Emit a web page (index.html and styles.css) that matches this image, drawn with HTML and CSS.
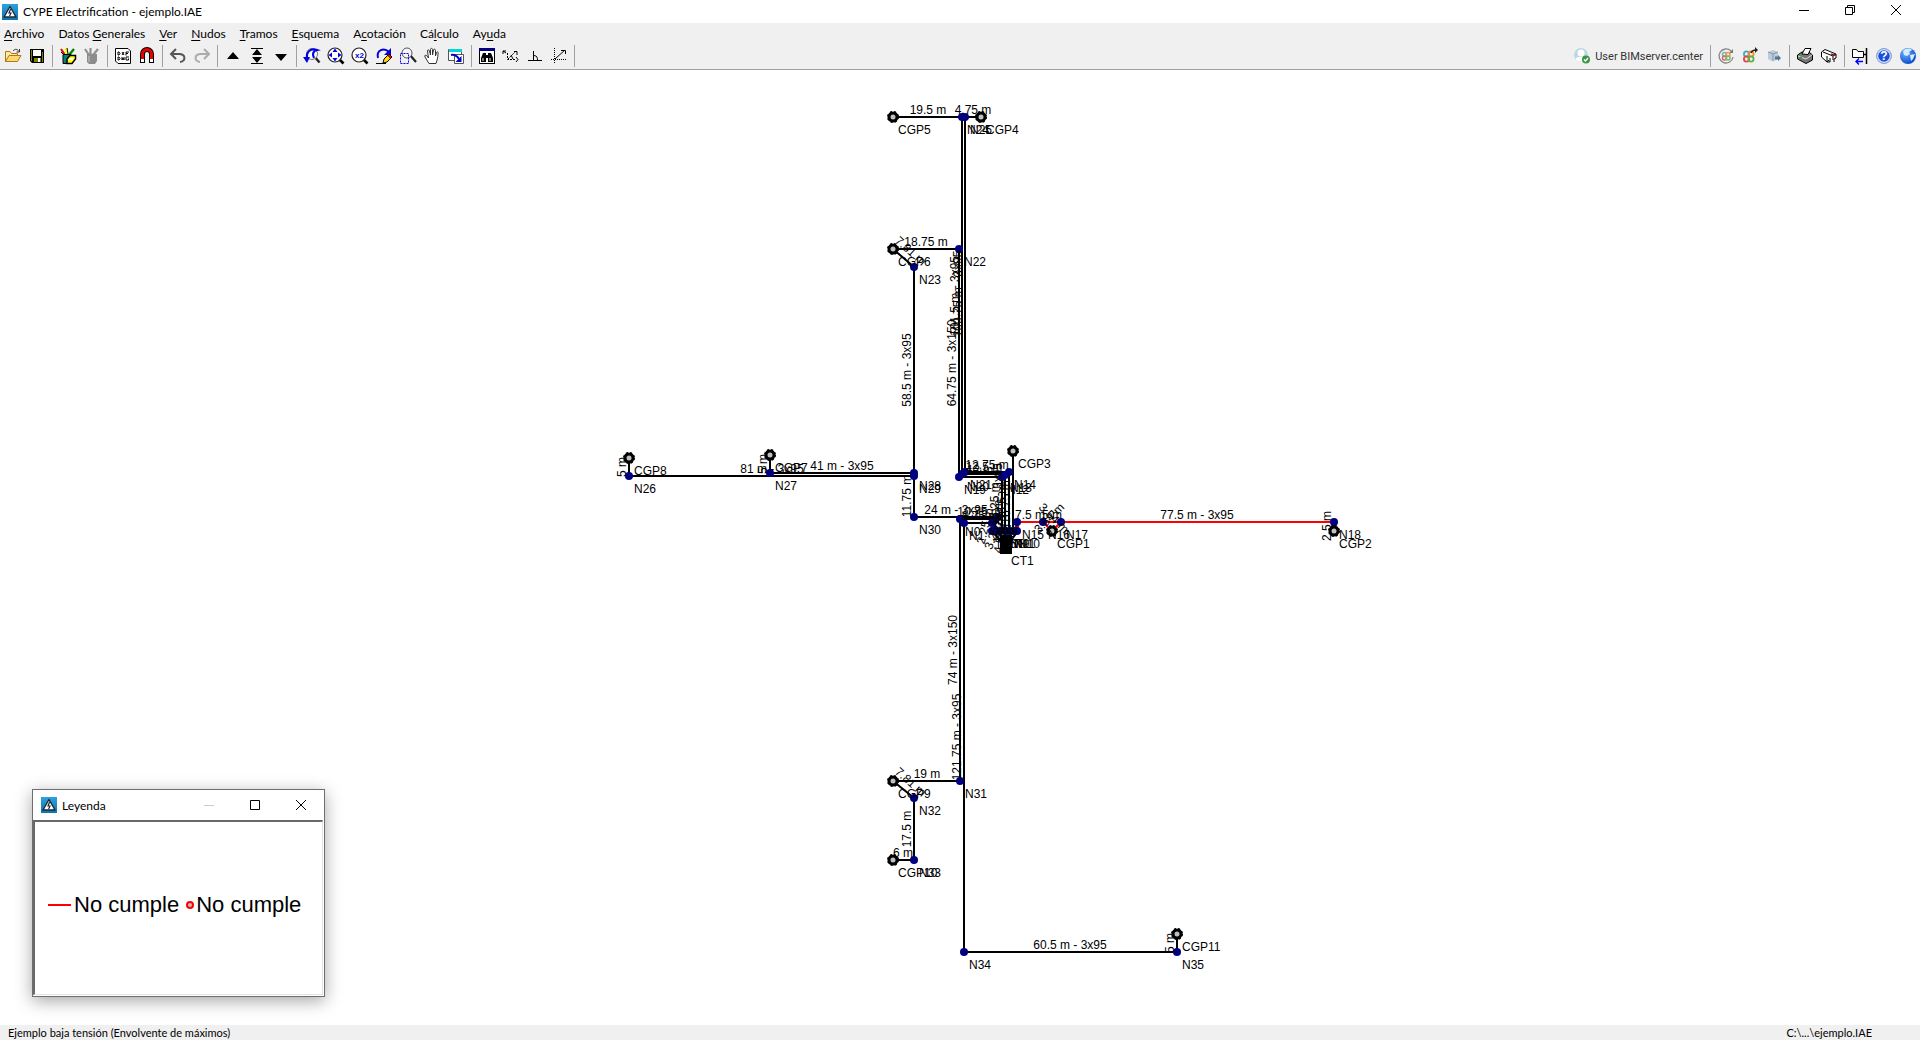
FILE: index.html
```
<!DOCTYPE html>
<html lang="es">
<head>
  <meta charset="UTF-8" />
  <meta name="viewport" content="width=device-width, initial-scale=1.0"/>
  <title>CYPE Electrification - ejemplo.IAE</title>
  <link rel="stylesheet" href="styles.css">
</head>
<body>

  <svg class="defs" aria-hidden="true">
    <defs>
      <linearGradient id="azul" x1="0" y1="0" x2="0" y2="1">
        <stop offset="0" stop-color="#2ba3e0"/><stop offset="1" stop-color="#1273ac"/>
      </linearGradient>
      <radialGradient id="bola" cx="0.35" cy="0.3" r="0.8">
        <stop offset="0" stop-color="#6db5ff"/><stop offset="1" stop-color="#003fc4"/>
      </radialGradient>
      <symbol id="logo" viewBox="0 0 16 16">
        <rect width="16" height="16" fill="url(#azul)"/>
        <path d="M8 2.5 L14 13 H2 Z" fill="#fff" stroke="#1b2838" stroke-width="1.4" stroke-linejoin="round"/>
        <path d="M8.6 5 L7 9 H9 L7.6 12" fill="none" stroke="#1b2838" stroke-width="1.2"/>
      </symbol>
      <symbol id="lupa" viewBox="0 0 20 20">
        <path d="M13.5 13.5 L17.5 17.5" stroke="#000" stroke-width="2.6"/>
        <circle cx="9" cy="9" r="7" fill="#fff" stroke="#222" stroke-width="1.2"/>
      </symbol>
      <circle id="nudo" r="4" fill="#000080"/>
      <g id="cgp">
        <circle r="4" fill="#c0c0c0" stroke="#000" stroke-width="3"/>
        <circle r="5" fill="none" stroke="#000" stroke-width="2" stroke-dasharray="2 2"/>
      </g>
    </defs>
  </svg>

  <header class="titlebar">
    <svg class="logo"><use href="#logo"/></svg>
    <h1>CYPE Electrification - ejemplo.IAE</h1>
    <div class="window-buttons">
      <button aria-label="Minimizar"><svg viewBox="0 0 12 12"><path d="M1 6.5 H11"/></svg></button>
      <button aria-label="Restaurar"><svg viewBox="0 0 12 12"><path d="M1.5 3.5 H8.5 V10.5 H1.5 Z M3.5 3.5 V1.5 H10.5 V8.5 H8.5"/></svg></button>
      <button aria-label="Cerrar"><svg viewBox="0 0 12 12"><path d="M1 1 L11 11 M11 1 L1 11"/></svg></button>
    </div>
  </header>

  <nav class="menu">
    <button><u>A</u>rchivo</button>
    <button>Datos <u>G</u>enerales</button>
    <button><u>V</u>er</button>
    <button><u>N</u>udos</button>
    <button><u>T</u>ramos</button>
    <button><u>E</u>squema</button>
    <button>A<u>c</u>otación</button>
    <button>Cá<u>l</u>culo</button>
    <button>Ay<u>u</u>da</button>
  </nav>

  <div class="toolbar">
    <div class="group">
      <button aria-label="Abrir"><svg viewBox="0 0 20 20">
        <path d="M2.5 15.5 V5.5 H7 L8.5 7.5 H14.5 V9.5" fill="#ffe9a8" stroke="#b07a10"/>
        <path d="M2.5 15.5 L6 9.5 H18 L14.5 15.5 Z" fill="#ffd873" stroke="#b07a10"/>
        <path d="M10 5 C12 2.5 14.5 3 16 5.5 M16.5 3 V6 H13.5" fill="none" stroke="#333"/>
      </svg></button>
      <button aria-label="Guardar"><svg viewBox="0 0 20 20">
        <path d="M3 3 H17 V17 H5 L3 15 Z" fill="#000"/>
        <rect x="6" y="4" width="8" height="6" fill="#fff"/>
        <path d="M4.5 4 V15 M15.5 6 V16" stroke="#808000"/>
        <rect x="7" y="12" width="7" height="4" fill="#808000"/><rect x="11" y="12" width="2" height="4" fill="#fff"/>
      </svg></button>
    </div>
    <div class="group">
      <button aria-label="Datos de obra"><svg viewBox="0 0 20 20">
        <path d="M7 9 L3 3" stroke="#e00000" stroke-width="2"/><path d="M8 9 V2" stroke="#ff0" stroke-width="2"/>
        <path d="M11 9 L16 3" stroke="#008000" stroke-width="2.4"/><path d="M3 6 L6 9 M9 2 L10 8" stroke="#000"/>
        <path d="M5 8.5 H13 V17.5 H5 Z" fill="#008080" stroke="#000"/>
        <path d="M9 13 L12 9.5 H17.5 V13 L14 17.5 H9 Z" fill="#ff0" stroke="#000" stroke-width="1.5"/>
        <path d="M11 13 H15" stroke="#fff" stroke-width="2"/>
      </svg></button>
      <button aria-label="Bibliotecas"><svg viewBox="0 0 20 20">
        <path d="M7 9 L3 3 M8.5 9 V2 M11 9 L16 3" stroke="#909090" stroke-width="2.2"/>
        <path d="M5 8 H15 V15 L13 18 H7 L5 16 Z" fill="#8c8c8c"/><path d="M7 10 V16" stroke="#c8c8c8"/>
      </svg></button>
    </div>
    <div class="group">
      <button aria-label="Plantillas"><svg viewBox="0 0 20 20">
        <path d="M2.5 2.5 H15 L17.5 5 V17.5 H5 L2.5 15 Z" fill="#fff" stroke="#000"/>
        <path d="M5 6 V9 H6 L7 7.5 L6 6 Z M9 6 L11 9 M11 6 L9 9 M16 6 H13 V7.5 H15 M13 7.5 V9.5 M5 11 V14 H6 L7 12.5 L6 11 Z M9 11 V14 L10 12 L11 14 V11 M16 11 H13 V14 H15.5 V12.5" fill="none" stroke="#000"/>
      </svg></button>
      <button aria-label="Capturas"><svg viewBox="0 0 20 20">
        <path d="M5.5 17 V8 A4.5 4.5 0 0 1 14.5 8 V17" fill="none" stroke="#000" stroke-width="5"/>
        <path d="M5.5 14 V8 A4.5 4.5 0 0 1 14.5 8 V14" fill="none" stroke="#e60000" stroke-width="3"/>
        <path d="M4 14.5 H7 M13 14.5 H16" stroke="#fff" stroke-width="3"/>
      </svg></button>
    </div>
    <div class="group">
      <button aria-label="Deshacer"><svg viewBox="0 0 20 20">
        <path d="M8 3 L3 8 L8 13 M3 8 H11 C18 8 18 15 12 16" fill="none" stroke="#555" stroke-width="2"/>
      </svg></button>
      <button aria-label="Rehacer"><svg viewBox="0 0 20 20">
        <path d="M12 3 L17 8 L12 13 M17 8 H9 C2 8 2 15 8 16" fill="none" stroke="#ababab" stroke-width="2"/>
      </svg></button>
    </div>
    <div class="group">
      <button aria-label="Subir"><svg viewBox="0 0 20 20"><path d="M4 13 L10 6 L16 13 Z"/></svg></button>
      <button aria-label="Grupos"><svg viewBox="0 0 20 20"><path d="M4 2.5 H16 M4 17.5 H16" stroke="#000"/><path d="M5 9 L10 3 L15 9 Z M5 11 L10 17 L15 11 Z"/></svg></button>
      <button aria-label="Bajar"><svg viewBox="0 0 20 20"><path d="M4 8 L10 15 L16 8 Z"/></svg></button>
    </div>
    <div class="group">
      <button aria-label="Vista anterior"><svg viewBox="0 0 20 20">
        <path d="M12 10 L17.5 16.5" stroke="#222" stroke-width="2.4"/><circle cx="10" cy="8" r="5.5" fill="#fff" stroke="#777"/>
        <path d="M5 13 C4 5 9 2 15 4 C11 5 10 8 12 12" fill="none" stroke="#0000e0" stroke-width="2.2"/>
        <path d="M1 11 H8 L5 17 Z" fill="#0000e0"/>
      </svg></button>
      <button aria-label="Vista completa"><svg viewBox="0 0 20 20"><use href="#lupa"/>
        <path d="M9 2.5 L11.5 6 H6.5 Z M9 15.5 L6.5 12 H11.5 Z M2.5 9 L6 6.5 V11.5 Z M15.5 9 L12 6.5 V11.5 Z" fill="#0000e0"/>
      </svg></button>
      <button aria-label="Vista doble"><svg viewBox="0 0 20 20"><use href="#lupa"/>
        <text class="x2" x="5" y="12">x2</text>
      </svg></button>
      <button aria-label="Redibujar"><svg viewBox="0 0 20 20">
        <path d="M4 12 C2 4 10 1 15 6" fill="none" stroke="#0000e0" stroke-width="2"/>
        <path d="M17 2 V9 H10 Z" fill="#0000e0"/><path d="M2 17.5 H12" stroke="#000"/>
        <path d="M9 17 L10 13 L15 8 L18 11 L13 16 Z" fill="#ffe000" stroke="#000"/><path d="M14 9 L17 12" stroke="#c00" stroke-width="2"/>
      </svg></button>
      <button aria-label="Marco de vista"><svg viewBox="0 0 20 20">
        <path d="M12 9 L18 16" stroke="#222" stroke-width="2.2"/><circle cx="9" cy="7" r="5" fill="#f8f8f8" stroke="#555"/>
        <path d="M2.5 7.5 H10.5 V17.5 H2.5 Z" fill="none" stroke="#00f" stroke-dasharray="2 1"/>
      </svg></button>
      <button aria-label="Mover vista"><svg viewBox="0 0 20 20">
        <path d="M7 17.5 L3 11 C2 9 4 8.5 5 10 L6.5 12 L5.5 5 C5.5 3.5 7 3.5 7.5 5 L8.5 9 V3.5 C8.5 2 10.5 2 10.5 3.5 V9 L11.5 4 C12 2.5 13.5 3 13.5 4.5 V10 L14.5 6.5 C15.5 5 16.5 6 16 8 C16 12 15 14 14 17.5 Z" fill="#fff" stroke="#333"/>
      </svg></button>
      <button aria-label="Vista global"><svg viewBox="0 0 20 20">
        <path d="M2.5 3.5 H15.5 V14.5 H2.5 Z" fill="#fff" stroke="#555"/><rect x="3" y="3" width="13" height="3" fill="#00d8d8"/>
        <path d="M8.5 8.5 H17.5 V17.5 H8.5 Z" fill="#fff" stroke="#555"/>
        <path d="M5 9 C9 8 11 10 13 13" fill="none" stroke="#00c" stroke-width="2"/><path d="M15.5 10 V16 H9.5 Z" fill="#00c"/>
      </svg></button>
    </div>
    <div class="group">
      <button aria-label="Buscar"><svg viewBox="0 0 20 20">
        <rect x="2.5" y="2.5" width="15" height="15" fill="#fff" stroke="#000"/><rect x="2" y="2" width="16" height="3" fill="#000080"/>
        <path d="M6 7 H9 V9 H11 V7 H14 L16 12 V16 H11 V12 H9 V16 H4 V12 Z"/><path d="M6 12 V15 M13 12 V15" stroke="#fff"/>
      </svg></button>
      <button aria-label="Coordenadas"><svg viewBox="0 0 20 20">
        <path d="M6.5 7 V13.5 H15 M7 13 L14 6" fill="none" stroke="#000" stroke-dasharray="2 1"/>
        <path d="M2 5 L5 7 M2 5 V8 M2 5 H5 M13 5.5 H16 V9 M15 11 L17 13.5 L15 16 M10 9 L12 13" fill="none" stroke="#000"/>
      </svg></button>
      <button aria-label="Ortogonal"><svg viewBox="0 0 20 20">
        <path d="M3 14.5 H17 M8.5 5 V14 M9 9.5 C12 9.5 12.5 12 12.5 14" fill="none" stroke="#000"/>
      </svg></button>
      <button aria-label="Referencias"><svg viewBox="0 0 20 20">
        <path d="M5.5 2 V18 M2 13.5 H18" stroke="#000" stroke-dasharray="1 1"/><path d="M6 13 L16 4 M12 4.5 H16.5 V8" fill="none" stroke="#000"/>
      </svg></button>
    </div>

    <div class="group right">
      <button class="user">
        <svg viewBox="0 0 20 20">
          <circle cx="8" cy="9" r="7" fill="#b9d9e4"/><circle cx="8" cy="7" r="3.5" fill="#fff"/>
          <path d="M2.5 13 C4 10 12 10 13.5 13 C11 16.5 5 16.5 2.5 13 Z" fill="#fff"/>
          <circle cx="13" cy="13.5" r="4" fill="#3f9443"/><path d="M11 13.5 L12.5 15 L15 12" fill="none" stroke="#fff" stroke-width="1.3"/>
        </svg>
        User BIMserver.center
      </button>
    </div>
    <div class="group">
      <button aria-label="Actualizar"><svg viewBox="0 0 20 20">
        <path d="M15 5 A7 7 0 1 0 17 11" fill="none" stroke="#888" stroke-width="1.3"/><path d="M17 3 V7 H13 Z" fill="#777"/>
        <g fill="none" stroke-width="1.5"><circle cx="8.5" cy="8.5" r="2" stroke="#6bb7c9"/><circle cx="12" cy="8.5" r="2" stroke="#e59a50"/><circle cx="8.5" cy="12" r="2" stroke="#d66"/><circle cx="12" cy="12" r="2" stroke="#7aba6a"/></g>
      </svg></button>
      <button aria-label="Compartir"><svg viewBox="0 0 20 20">
        <g fill="none" stroke-width="1.8"><circle cx="6.5" cy="8" r="2.6" stroke="#3bacc8"/><circle cx="11" cy="8" r="2.6" stroke="#ef8a2d"/><circle cx="6.5" cy="13" r="2.6" stroke="#e24848"/><circle cx="11" cy="13" r="2.6" stroke="#62b146"/></g>
        <path d="M11 7 C12 4 14 4 16 4" fill="none" stroke="#222" stroke-width="1.5"/><path d="M15 1 L18 4 L15 7 Z" fill="#222"/>
      </svg></button>
      <button aria-label="Exportar modelo"><svg viewBox="0 0 20 20">
        <path d="M4 6 L9 4 L14 6 V13 L9 15.5 L4 13 Z" fill="#bccbd9"/><path d="M4 6 L9 8 L14 6 M9 8 V15" fill="none" stroke="#8298ad"/><path d="M11 10.5 H14 V9 L17 12 L14 15 V13.5 H11 Z" fill="#4d7598"/>
      </svg></button>
    </div>
    <div class="group">
      <button aria-label="Listados"><svg viewBox="0 0 20 20">
        <path d="M2.5 9 L7 6 H14 L17.5 9 V14 L11 17.5 L2.5 13 Z" fill="#777" stroke="#000"/>
        <path d="M7 8 L10 2.5 H16 L13 8.5 Z" fill="#fff" stroke="#000"/><path d="M3 10 L11 13 L17 9" fill="none" stroke="#ddd"/><path d="M5 11.5 H7" stroke="#0c0" stroke-width="1.5"/>
      </svg></button>
      <button aria-label="Planos"><svg viewBox="0 0 20 20">
        <path d="M2.5 6 L6 3.5 L17 8 V12 L15 13 V16 M2.5 6 V11 L8 16 L10 14" fill="#fff" stroke="#000"/>
        <path d="M4 6 L14 10 V14 M8 10 V16 H11 V12 M12 8 L17 9" fill="none" stroke="#000"/><rect x="14" y="8" width="2" height="2" fill="#d00"/>
      </svg></button>
    </div>
    <div class="group">
      <button aria-label="Exportar"><svg viewBox="0 0 20 20">
        <path d="M2.5 11.5 V3.5 H6.5 L8 5.5 H13.5 V11.5 Z" fill="#fff" stroke="#000"/><path d="M16.5 2 V18 M14 8.5 H17" stroke="#000" stroke-width="1.5"/>
        <path d="M6 15.5 H13 M9 12.5 L6 15.5 L9 18.5" fill="none" stroke="#00f" stroke-width="1.4"/>
      </svg></button>
      <button aria-label="Ayuda"><svg viewBox="0 0 20 20">
        <circle cx="10" cy="10" r="7.5" fill="#1c4fd8" stroke="#8fa6dc"/><circle cx="10" cy="10" r="6.4" fill="none" stroke="#dfe8fb" stroke-width="1.2"/>
        <text class="help" x="10" y="14">?</text>
      </svg></button>
      <button aria-label="Web"><svg viewBox="0 0 20 20">
        <circle cx="10" cy="10" r="8" fill="url(#bola)"/><path d="M5 5 C8 2 12 2 14 4 L11 6 L12 8 L9 10 L6 9 Z M12 9 L17 8 L15 13 L13 15 Z" fill="#d5ecff"/>
      </svg></button>
    </div>
  </div>

  <main class="canvas">
    <svg class="plano" role="img" aria-label="Esquema de la red">
      <g transform="translate(0 -70)">

        <!-- tramos -->
        <g class="tramos">
          <path d="M893 117 H981 M962 117 V474 H1005 V531 M965 117 V472 H1011"/>
          <path d="M893 249 H959 V477 H1002 V531 M893 249 L914 267 V517 H998"/>
          <path d="M629 458 V476 H914 M770 455 V473 H914"/>
          <path d="M1013 451 V531 M1009 473 V531"/>
          <path d="M960 781 V519 H998 L992 531 M964 952 V523 H992 L1001 531"/>
          <path d="M893 781 H960 M893 781 L914 798 V860 H893"/>
          <path d="M964 952 H1177 V934"/>
        </g>
        <path class="malo" d="M1018 531 V522 H1334 V531 M1043 522 L1052 531 L1061 522"/>
        <rect x="1000" y="535" width="12" height="19"/>
        <path class="tramos" d="M992 531 L1006 547 M998 531 L1006 547 M1018 531 L1006 547"/>

        <!-- nudos -->
        <use href="#nudo" x="962" y="117"/><use href="#nudo" x="965" y="117"/>
        <use href="#nudo" x="959" y="249"/><use href="#nudo" x="914" y="267"/>
        <use href="#nudo" x="914" y="473"/><use href="#nudo" x="914" y="476"/>
        <use href="#nudo" x="629" y="476"/><use href="#nudo" x="770" y="473"/>
        <use href="#nudo" x="914" y="517"/>
        <use href="#nudo" x="959" y="477"/><use href="#nudo" x="962" y="474"/><use href="#nudo" x="965" y="472"/>
        <use href="#nudo" x="1002" y="477"/><use href="#nudo" x="1005" y="475"/><use href="#nudo" x="1009" y="472"/>
        <use href="#nudo" x="960" y="519"/><use href="#nudo" x="964" y="523"/>
        <use href="#nudo" x="998" y="517"/><use href="#nudo" x="995" y="520"/><use href="#nudo" x="992" y="523"/>
        <use href="#nudo" x="992" y="531"/><use href="#nudo" x="996" y="531"/><use href="#nudo" x="1000" y="531"/>
        <use href="#nudo" x="1005" y="531"/><use href="#nudo" x="1009" y="531"/><use href="#nudo" x="1013" y="531"/>
        <use href="#nudo" x="1017" y="531"/><use href="#nudo" x="1017" y="522"/>
        <use href="#nudo" x="1043" y="522"/><use href="#nudo" x="1061" y="522"/><use href="#nudo" x="1334" y="522"/>
        <use href="#nudo" x="960" y="781"/><use href="#nudo" x="914" y="798"/><use href="#nudo" x="914" y="860"/>
        <use href="#nudo" x="964" y="952"/><use href="#nudo" x="1177" y="952"/>

        <!-- cajas generales de proteccion -->
        <use href="#cgp" x="893" y="117"/><use href="#cgp" x="981" y="117"/><use href="#cgp" x="893" y="249"/>
        <use href="#cgp" x="629" y="458"/><use href="#cgp" x="770" y="455"/><use href="#cgp" x="1013" y="451"/>
        <use href="#cgp" x="1052" y="531"/><use href="#cgp" x="1334" y="531"/><use href="#cgp" x="893" y="781"/>
        <use href="#cgp" x="893" y="860"/><use href="#cgp" x="1177" y="934"/>

        <!-- nombres de los nudos -->
        <g class="nombres">
          <text x="898" y="134">CGP5</text><text x="967" y="134">N24</text><text x="970" y="134">N25</text><text x="986" y="134">CGP4</text>
          <text x="898" y="266">CGP6</text><text x="964" y="266">N22</text><text x="919" y="284">N23</text>
          <text x="634" y="475">CGP8</text><text x="634" y="493">N26</text><text x="775" y="472">CGP7</text><text x="775" y="490">N27</text>
          <text x="919" y="490">N28</text><text x="919" y="493">N29</text><text x="919" y="534">N30</text>
          <text x="1018" y="468">CGP3</text><text x="964" y="494">N19</text><text x="967" y="491">N20</text><text x="970" y="489">N21</text>
          <text x="1007" y="494">N12</text><text x="1010" y="492">N13</text><text x="1014" y="489">N14</text>
          <text x="965" y="536">N0</text><text x="969" y="540">N1</text><text x="997" y="540">N2</text><text x="1000" y="537">N3</text><text x="1003" y="534">N4</text>
          <text x="997" y="548">N5</text><text x="1001" y="548">N6</text><text x="1005" y="548">N7</text><text x="1010" y="548">N8</text><text x="1014" y="548">N9</text><text x="1018" y="548">N10</text><text x="1014" y="548">N11</text>
          <text x="1022" y="539">N15</text><text x="1048" y="539">N16</text><text x="1066" y="539">N17</text><text x="1339" y="539">N18</text>
          <text x="1057" y="548">CGP1</text><text x="1339" y="548">CGP2</text><text x="1011" y="565">CT1</text>
          <text x="965" y="798">N31</text><text x="898" y="798">CGP9</text><text x="919" y="815">N32</text>
          <text x="898" y="877">CGP10</text><text x="919" y="877">N33</text>
          <text x="969" y="969">N34</text><text x="1182" y="951">CGP11</text><text x="1182" y="969">N35</text>
        </g>

        <!-- longitudes -->
        <g class="longitudes">
          <text x="928" y="114">19.5 m</text><text x="973" y="114">4.75 m</text><text x="926" y="246">18.75 m</text>
          <text x="772" y="473">81 m - 3x95</text><text x="842" y="470">41 m - 3x95</text>
          <text x="980" y="474">12 m</text><text x="984" y="471">12.5 m</text><text x="987" y="469">12.75 m</text>
          <text x="956" y="514">24 m - 3x95</text><text x="979" y="516">10.75 m</text><text x="980" y="520">8.75 m</text>
          <text x="1030" y="519">7.5 m</text><text x="1052" y="519">5 m</text><text x="1197" y="519">77.5 m - 3x95</text>
          <text x="927" y="778">19 m</text><text x="903" y="857">6 m</text><text x="1070" y="949">60.5 m - 3x95</text>
          <text transform="translate(911 370) rotate(-90)">58.5 m - 3x95</text>
          <text transform="translate(956 363) rotate(-90)">64.75 m - 3x150</text>
          <text transform="translate(959 296) rotate(-90)">101.5 m - 3x95</text>
          <text transform="translate(962 294) rotate(-90)">100.75 m - 3x95</text>
          <text transform="translate(911 496) rotate(-90)">11.75 m</text>
          <text transform="translate(626 467) rotate(-90)">5 m</text>
          <text transform="translate(767 464) rotate(-90)">5 m</text>
          <text transform="translate(999 504) rotate(-90)">15.25 m</text>
          <text transform="translate(1002 503) rotate(-90)">15.25 m - 3x95</text>
          <text transform="translate(1006 502) rotate(-90)">16.5 m</text>
          <text transform="translate(1010 502) rotate(-90)">16.75 m</text>
          <text transform="translate(989 527) rotate(-75)">2.25 m</text>
          <text transform="translate(998 533) rotate(-70)">3.25 m</text>
          <text transform="translate(1004 539) rotate(-80)">4.5 m</text>
          <text transform="translate(1010 539) rotate(-90)">4.5 m</text>
          <text transform="translate(1051 521) rotate(45)">3.54 m</text>
          <text transform="translate(1052 521) rotate(-45)">3.54 m</text>
          <text transform="translate(1331 526) rotate(-90)">2.5 m</text>
          <text transform="translate(957 650) rotate(-90)">74 m - 3x150</text>
          <text transform="translate(961 737) rotate(-90)">121.75 m - 3x95</text>
          <text transform="translate(911 829) rotate(-90)">17.5 m</text>
          <text transform="translate(1174 943) rotate(-90)">5 m</text>
          <text transform="translate(908 254) rotate(42)">7.81 m</text>
          <text transform="translate(908 785) rotate(42)">7.81 m</text>
        </g>
      </g>
    </svg>

    <section class="leyenda">
      <div class="leyenda-title">
        <svg class="logo"><use href="#logo"/></svg>
        <h2>Leyenda</h2>
        <div class="window-buttons">
          <button aria-label="Minimizar" disabled><svg viewBox="0 0 12 12"><path d="M1 6.5 H11"/></svg></button>
          <button aria-label="Maximizar"><svg viewBox="0 0 12 12"><path d="M1.5 1.5 H10.5 V10.5 H1.5 Z"/></svg></button>
          <button aria-label="Cerrar"><svg viewBox="0 0 12 12"><path d="M1 1 L11 11 M11 1 L1 11"/></svg></button>
        </div>
      </div>
      <div class="leyenda-body">
        <span class="linea"></span>
        <span>No cumple</span>
        <span class="punto"></span>
        <span>No cumple</span>
      </div>
    </section>
  </main>

  <footer>
    <span>Ejemplo baja tensión (Envolvente de máximos)</span>
    <span>C:\...\ejemplo.IAE</span>
  </footer>

</body>
</html>
```
FILE: styles.css
```
body {
  margin: 0;
  height: 100vh;
  display: flex;
  flex-direction: column;
  overflow: hidden;
  background: #fff;
  color: #000;
  font-family: Lato, "Open Sans", sans-serif;
  font-size: 12px;
}

button {
  margin: 0;
  padding: 0;
  border: none;
  background: none;
  color: inherit;
  font: inherit;
}

.defs {
  position: absolute;
  width: 0;
  height: 0;
}

.logo {
  width: 16px;
  height: 16px;
}

/* Barra de titulo */
.titlebar {
  display: flex;
  align-items: center;
  height: 23px;
  padding: 0 1px 0 2px;
}

.titlebar h1,
.leyenda h2 {
  margin: 0 0 0 5px;
  font-size: 12px;
  font-weight: normal;
}

.window-buttons {
  display: flex;
  margin-left: auto;
}

.titlebar .window-buttons {
  align-self: flex-start;
}

.window-buttons button {
  display: flex;
  align-items: center;
  justify-content: center;
  width: 46px;
  height: 20px;
}

.window-buttons svg {
  width: 12px;
  height: 12px;
  fill: none;
  stroke: #000;
}

.window-buttons button:disabled svg {
  stroke: #ccc;
}

/* Menu */
.menu {
  display: flex;
  gap: 14px;
  height: 22px;
  padding-left: 4px;
  background: #f0f0f0;
}

.menu button {
  height: 20px;
}

.menu u {
  text-underline-offset: 2px;
}

/* Barra de herramientas */
.toolbar {
  display: flex;
  align-items: flex-start;
  box-sizing: border-box;
  height: 25px;
  padding-left: 1px;
  background: #f0f0f0;
  border-bottom: 1px solid #a0a0a0;
}

.group {
  display: flex;
  align-items: center;
}

.group::after {
  content: "";
  width: 1px;
  height: 22px;
  margin: 0 3px;
  background: #a0a0a0;
}

.group:last-child::after {
  display: none;
}

.group button {
  display: flex;
  align-items: center;
  justify-content: center;
  width: 24px;
  height: 22px;
}

.group svg {
  width: 20px;
  height: 20px;
}

.right {
  margin-left: auto;
}

.group .user {
  width: auto;
  gap: 2px;
  padding-right: 4px;
  color: #333;
  font-family: Roboto, sans-serif;
  font-size: 11px;
}

.x2 {
  font: bold 8px "Liberation Sans", sans-serif;
  fill: #0000e0;
}

.help {
  font: bold 12px "Liberation Sans", sans-serif;
  fill: #fff;
  text-anchor: middle;
}

/* Esquema */
.canvas {
  position: relative;
  flex: 1;
  min-height: 0;
}

.plano {
  display: block;
  width: 100%;
  height: 100%;
  font-family: "Liberation Sans", Arial, sans-serif;
  font-size: 12px;
}

.tramos {
  fill: none;
  stroke: #000;
  stroke-width: 2;
}

.malo {
  fill: none;
  stroke: #f00;
  stroke-width: 2;
}

.longitudes {
  text-anchor: middle;
}

/* Leyenda */
.leyenda {
  position: absolute;
  left: 32px;
  bottom: 28px;
  display: flex;
  flex-direction: column;
  box-sizing: border-box;
  width: 293px;
  height: 208px;
  border: 1px solid #6e6e6e;
  background: #fff;
  box-shadow: 0 4px 16px rgba(0,0,0,0.35);
}

.leyenda-title {
  display: flex;
  align-items: center;
  height: 30px;
  padding-left: 8px;
}

.leyenda-body {
  flex: 1;
  display: flex;
  align-items: center;
  margin: 0 1px 1px 0;
  padding: 0 0 6px 13px;
  border: 2px solid #696969;
  border-right: 1px solid #e3e3e3;
  border-bottom: 1px solid #e3e3e3;
  font-family: "Liberation Sans", Arial, sans-serif;
  font-size: 22px;
}

.linea {
  width: 23px;
  height: 2px;
  margin-right: 3px;
  background: #f00;
}

.punto {
  width: 4px;
  height: 4px;
  margin: 0 2px 0 7px;
  border: 2px solid #f00;
  border-radius: 50%;
  background: #c0c0c0;
}

/* Barra de estado */
footer {
  display: flex;
  justify-content: space-between;
  height: 15px;
  line-height: 15px;
  padding: 0 48px 0 8px;
  background: #f0f0f0;
  font-size: 11px;
}
```
